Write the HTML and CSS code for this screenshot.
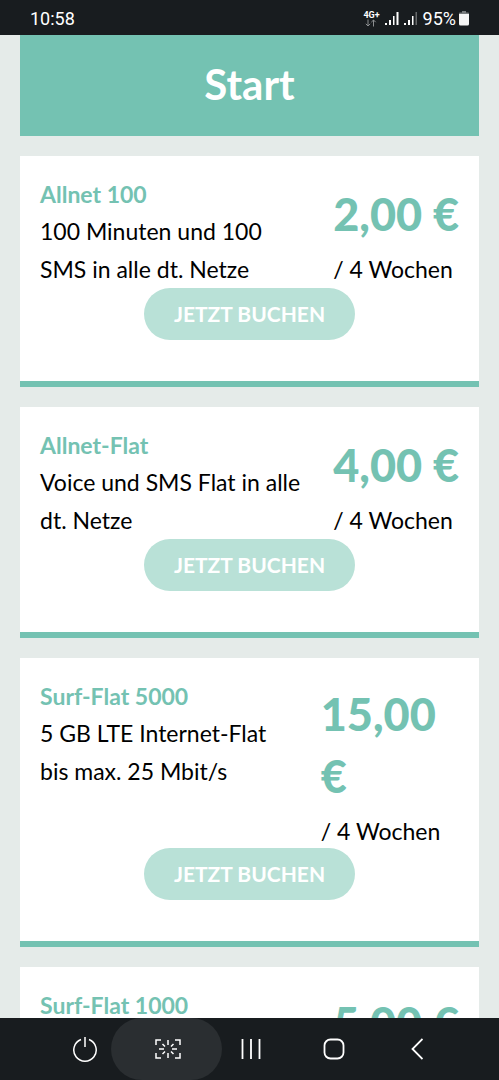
FILE: index.html
```html
<!DOCTYPE html>
<html lang="de">
<head>
<meta charset="utf-8">
<meta name="viewport" content="width=device-width, initial-scale=1">
<title>Start</title>
<link rel="stylesheet" href="styles.css">
</head>
<body>
<div class="status">
  <span class="clock">10:58</span>
  <div class="indicators">
    <div class="network">
      <span>4G+</span>
      <svg width="12" height="8" viewBox="0 0 12 8" fill="none" stroke="#8b8e90" stroke-width="1"><path d="M3 0.5V7M0.8 4.8L3 7l2.2-2.2M8.5 7.5V1M6.3 3.2L8.500 1l2.200 2.200"/></svg>
    </div>
    <svg width="14" height="14" viewBox="0 0 14 14" fill="#fff"><path d="M0 11h2v2H0zM4 8h2v5H4zM8 4h1.500v9H8zM11.500 0h2v13h-2z"/></svg>
    <svg width="14" height="14" viewBox="0 0 14 14" fill="#fff"><path d="M0 11h2v2H0zM4 8h2v5H4zM8 4h1.500v9H8z"/><path fill="#66696b" d="M11.500 0h1.500v13h-1.500z"/></svg>
    <span class="percent">95%</span>
    <svg width="10" height="15" viewBox="0 0 10 15"><path fill="#777b7d" d="M3 0h4v1.500h2q1 0 1 1V4H0V2.500q0-1 1-1h2z"/><path fill="#f5f5f5" d="M0 3h10v10q0 1.500-1.500 1.500h-7Q0 14.500 0 13z"/></svg>
  </div>
</div>
<main class="page">
  <h1 class="heading">Start</h1>
  <article class="card">
    <div class="offer">
      <div class="info"><h2 class="name">Allnet 100</h2><p class="text">100 Minuten und 100 SMS in alle dt. Netze</p></div>
      <div class="price"><p class="amount">2,00 €</p><p class="period">/ 4 Wochen</p></div>
    </div>
    <button class="book" type="button">JETZT BUCHEN</button>
  </article>
  <article class="card">
    <div class="offer">
      <div class="info"><h2 class="name">Allnet-Flat</h2><p class="text">Voice und SMS Flat in alle dt. Netze</p></div>
      <div class="price"><p class="amount">4,00 €</p><p class="period">/ 4 Wochen</p></div>
    </div>
    <button class="book" type="button">JETZT BUCHEN</button>
  </article>
  <article class="card">
    <div class="offer">
      <div class="info"><h2 class="name">Surf-Flat 5000</h2><p class="text">5 GB LTE Internet-Flat bis max. 25 Mbit/s</p></div>
      <div class="price"><p class="amount">15,00 €</p><p class="period">/ 4 Wochen</p></div>
    </div>
    <button class="book" type="button">JETZT BUCHEN</button>
  </article>
  <article class="card">
    <div class="offer">
      <div class="info"><h2 class="name">Surf-Flat 1000</h2></div>
      <div class="price"><p class="amount">5,00 €</p></div>
    </div>
  </article>
</main>
<nav class="navbar">
  <button type="button" aria-label="Ein/Aus"><svg width="26" height="28" viewBox="0 0 26 28" fill="none" stroke="#fff" stroke-width="1.500"><path d="M9 4.500A11.200 11.200 0 1 0 17 4.500M13 2V12"/></svg></button>
  <button class="active" type="button" aria-label="Screenshot"><svg width="26" height="20" viewBox="0 0 26 20" fill="none" stroke="#fff" stroke-width="1.500"><path d="M1 6V1h5M20 1h5v5M25 14v5h-5M6 19H1v-5M13 1v5M13 14v5M4 10h5M17 10h5M7.500 5l2.500 2.500M18.500 5L16 7.500M7.500 15l2.500-2.500M18.500 15L16 12.500"/></svg></button>
  <button type="button" aria-label="Letzte Apps"><svg width="20" height="22" viewBox="0 0 20 22" fill="none" stroke="#fff" stroke-width="1.800"><path d="M1.500 1v20M10 1v20M18.500 1v20"/></svg></button>
  <button type="button" aria-label="Startseite"><svg width="22" height="22" viewBox="0 0 22 22" fill="none" stroke="#fff" stroke-width="1.800"><rect x="1.500" y="1.500" width="19" height="19" rx="6"/></svg></button>
  <button type="button" aria-label="Zurück"><svg width="12" height="22" viewBox="0 0 12 22" fill="none" stroke="#fff" stroke-width="1.800"><path d="M11.500 1L1.500 11l10 10"/></svg></button>
</nav>
</body>
</html>
```
FILE: styles.css
```css
* { box-sizing: border-box; }

body {
  margin: 0;
  height: 100vh;
  display: flex;
  flex-direction: column;
  overflow: hidden;
  background: #e5ebe9;
  color: #000;
  font-family: Lato, sans-serif;
  font-size: 23px;
  line-height: 38px;
}

h1, h2, p { margin: 0; }

button {
  border: 0;
  padding: 0;
  background: none;
  font: inherit;
}

svg { display: block; }

.status {
  flex: none;
  height: 35px;
  padding: 2px 30px 0 30px;
  display: flex;
  align-items: center;
  justify-content: space-between;
  background: #181c1f;
  color: #fff;
  font-family: Roboto, sans-serif;
  font-size: 18px;
  line-height: 22px;
}

.indicators {
  display: flex;
  align-items: center;
  gap: 5px;
}

.network {
  display: flex;
  flex-direction: column;
  align-items: center;
  font-size: 9px;
  font-weight: 700;
  line-height: 8px;
}

.percent { margin-right: -2px; }

.page {
  flex: 1;
  min-height: 0;
  overflow: hidden;
  padding: 0 20px;
}

.heading {
  padding: 19px 0 22px;
  background: #74c2b2;
  color: #fff;
  font-size: 42px;
  font-weight: 700;
  line-height: 60px;
  text-align: center;
}

.card {
  margin-top: 20px;
  padding: 20px 20px 41px;
  border-bottom: 6px solid #74c2b2;
  background: #fff;
}

.offer {
  display: flex;
  justify-content: space-between;
  align-items: center;
  gap: 24px;
}

.info {
  flex: 1;
  align-self: flex-start;
}

.name {
  color: #74c2b2;
  font-size: 23px;
  font-weight: 700;
  line-height: 36px;
}

.price {
  flex: none;
  max-width: 33%;
  padding-top: 5px;
}

.amount {
  margin-bottom: 7px;
  color: #74c2b2;
  font-size: 45px;
  font-weight: 900;
  line-height: 62px;
}

.period { line-height: 34px; }

.book {
  display: block;
  margin: 0 auto;
  padding: 0 30px;
  border-radius: 26px;
  background: #b9e1d7;
  color: #fff;
  font-size: 21px;
  font-weight: 700;
  line-height: 52px;
}

.navbar {
  flex: none;
  height: 62px;
  padding: 0 41px 0 43px;
  display: flex;
  overflow: hidden;
  background: #181c1f;
}

.navbar button {
  flex: 1;
  position: relative;
  display: flex;
  align-items: center;
  justify-content: center;
}

.navbar svg { position: relative; }

.navbar .active::before {
  content: "";
  position: absolute;
  inset: 0 -13px 0 -15px;
  border-radius: 31px;
  background: #2a2e31;
}
```
